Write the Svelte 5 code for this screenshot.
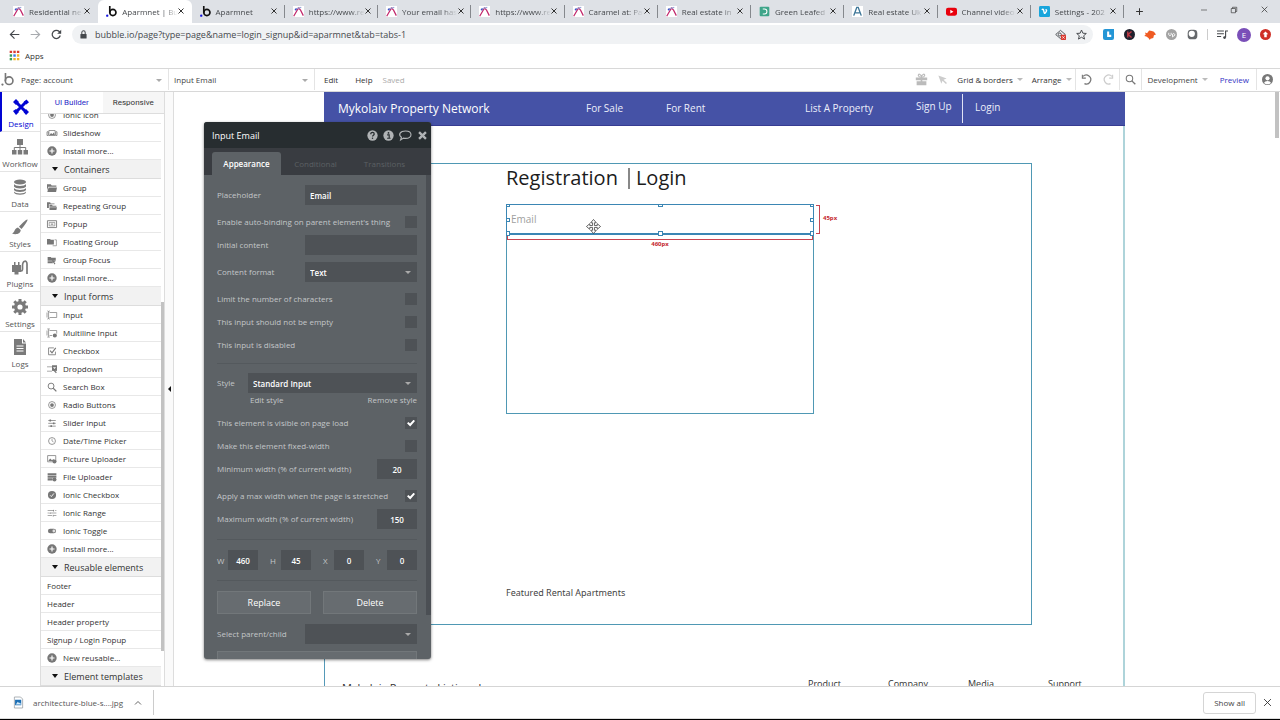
<script lang="ts">
  /**
   * App.svelte
   *
   * Browser window with the visual page editor open on the account page:
   * tool rail, element palette, page canvas and the property editor.
   */

  type Tab = { title: string; icon: string; active?: boolean };
  type Row = { label: string; icon?: string };
  type Section = { title?: string; rows: Row[] };

  const tabs: Tab[] = [
    { title: 'Residential ne', icon: 'chart' },
    { title: 'Aparmnet | Bu', icon: 'bubble', active: true },
    { title: 'Aparmnet', icon: 'bubble' },
    { title: 'https://www.re', icon: 'chart' },
    { title: 'Your email has', icon: 'chart' },
    { title: 'https://www.re', icon: 'chart' },
    { title: 'Caramel at: Pa', icon: 'chart' },
    { title: 'Real estate in', icon: 'chart' },
    { title: 'Green Leafed', icon: 'green' },
    { title: 'Real estate Uk', icon: 'letter' },
    { title: 'Channel video', icon: 'youtube' },
    { title: 'Settings - 202', icon: 'vimeo' },
  ];

  const rail = [
    { label: 'Design', icon: 'design' },
    { label: 'Workflow', icon: 'workflow' },
    { label: 'Data', icon: 'data' },
    { label: 'Styles', icon: 'brush' },
    { label: 'Plugins', icon: 'plug' },
    { label: 'Settings', icon: 'gear' },
    { label: 'Logs', icon: 'page' },
  ];

  const sections: Section[] = [
    {
      rows: [
        { label: 'Ionic Icon', icon: 'radio' },
        { label: 'Slideshow', icon: 'slides' },
        { label: 'Install more...', icon: 'plus' },
      ],
    },
    {
      title: 'Containers',
      rows: [
        { label: 'Group', icon: 'folder' },
        { label: 'Repeating Group', icon: 'folders' },
        { label: 'Popup', icon: 'popup' },
        { label: 'Floating Group', icon: 'floating' },
        { label: 'Group Focus', icon: 'focus' },
        { label: 'Install more...', icon: 'plus' },
      ],
    },
    {
      title: 'Input forms',
      rows: [
        { label: 'Input', icon: 'input' },
        { label: 'Multiline Input', icon: 'multiline' },
        { label: 'Checkbox', icon: 'check' },
        { label: 'Dropdown', icon: 'dropdown' },
        { label: 'Search Box', icon: 'search' },
        { label: 'Radio Buttons', icon: 'radio' },
        { label: 'Slider Input', icon: 'slider' },
        { label: 'Date/Time Picker', icon: 'clock' },
        { label: 'Picture Uploader', icon: 'picture' },
        { label: 'File Uploader', icon: 'file' },
        { label: 'Ionic Checkbox', icon: 'tick' },
        { label: 'Ionic Range', icon: 'range' },
        { label: 'Ionic Toggle', icon: 'toggle' },
        { label: 'Install more...', icon: 'plus' },
      ],
    },
    {
      title: 'Reusable elements',
      rows: [
        { label: 'Footer' },
        { label: 'Header' },
        { label: 'Header property' },
        { label: 'Signup / Login Popup' },
        { label: 'New reusable...', icon: 'plus' },
      ],
    },
    { title: 'Element templates', rows: [] },
  ];

  // All glyphs are drawn on a 16x16 grid with currentColor
  const line = 'fill="none" stroke="currentColor"';
  const icons: Record<string, string> = {
    chart: `<rect width="16" height="16" fill="#fff"/><path d="M1 15 8 3l3 3 4 8" fill="none" stroke="#c2286c" stroke-width="1.8"/><path d="m4 4 8-2" stroke="#9aa7d8" stroke-width="1.5"/><circle cx="4" cy="5" r="1.5" fill="#3b4fc4"/>`,
    bubble: `<path d="M5.5 0v10" stroke="#111" stroke-width="2.4"/><circle cx="10" cy="9.5" r="4.5" fill="none" stroke="#111" stroke-width="2.4"/><circle cx="1.8" cy="14" r="1.7" fill="#1414e0"/>`,
    logo: `<path d="M5.5 0v10" stroke="#777" stroke-width="2"/><circle cx="10" cy="9.5" r="4.7" fill="none" stroke="#777" stroke-width="2"/><circle cx="1.8" cy="14.2" r="1.4" fill="#777"/>`,
    green: `<rect x="1" y="1" width="14" height="14" rx="1.5" fill="#3fa58a"/><path d="M5.5 4.5h2.5a3.5 3.5 0 0 1 0 7H5.5" fill="none" stroke="#fff" stroke-width="1.5"/>`,
    letter: `<rect width="16" height="16" fill="#fff"/><path d="m2.5 14 4.500-12h2l4.500 12M5 10h6" fill="none" stroke="#3c7597" stroke-width="2"/>`,
    youtube: `<rect y="2.5" width="16" height="11.5" rx="3" fill="#e8000c"/><path d="m6.300 5.500 4.500 2.800-4.500 2.700z" fill="#fff"/>`,
    vimeo: `<rect width="16" height="16" rx="2" fill="#18a5dc"/><path d="M4 5.500c2-1.500 2.500-1 3 2 .6 3.500 1 4.500 3 1.500 1.500-2.500 1.500-4-.5-3.500" fill="none" stroke="#fff" stroke-width="2"/>`,
    close: `<path d="m3 3 10 10M13 3 3 13" ${line} stroke-width="2"/>`,
    thinclose: `<path d="m3 3 10 10M13 3 3 13" ${line} stroke-width="1.3"/>`,
    add: `<path d="M8 2v12M2 8h12" ${line} stroke-width="1.8"/>`,
    min: `<path d="M2 8h12" ${line} stroke-width="1.2"/>`,
    restore: `<path d="M2.500 5h8.500v8.500H2.500zM5 5V2.500h8.500V11H11" ${line} stroke-width="1.3"/>`,
    back: `<path d="M15 8H2m6-6L2 8l6 6" ${line} stroke-width="1.7"/>`,
    forward: `<path d="M1 8h13M8 2l6 6-6 6" ${line} stroke-width="1.7"/>`,
    reload: `<path d="M13.500 9.500A6 6 0 1 1 12 3.700L14 6" ${line} stroke-width="1.8"/><path d="M14.800 1v6H9z" fill="currentColor"/>`,
    lock: `<rect x="2.5" y="7" width="11" height="8" rx="1" fill="currentColor"/><path d="M5 7V4.500a3 3 0 0 1 6 0V7" ${line} stroke-width="1.8"/>`,
    apps: `<path d="M1 1h3.500v3.500H1zM11.500 1H15v3.500h-3.500z" fill="#d93c30"/><path d="M6.300 1h3.500v3.500H6.300z" fill="#d93c30"/><path d="M1 6.300h3.500v3.500H1z" fill="#3a9b53"/><path d="M6.300 6.300h3.500v3.500H6.300z" fill="#3b78e7"/><path d="M11.500 6.300H15v3.500h-3.500zM6.300 11.500h3.500V15H6.300zM11.500 11.500H15V15h-3.500z" fill="#efb52b"/><path d="M1 11.500h3.500V15H1z" fill="#3a9b53"/>`,
    blocked: `<path d="m1 8 7-6 7 6-7 6z" ${line} stroke-width="1.3"/><circle cx="7" cy="8" r="2.2" ${line} stroke-width="1.3"/><rect x="8.5" y="8.5" width="7.5" height="7.5" rx="1" fill="#d9392f"/><path d="m10.500 10.500 3.500 3.500m0-3.500-3.500 3.500" stroke="#fff"/>`,
    star: `<path d="m8 1.500 2 4.600 5 .4-3.800 3.300 1.200 4.900L8 12l-4.400 2.700 1.200-4.900L1 6.500l5-.4z" ${line} stroke-width="1.4"/>`,
    bluebox: `<path d="M3 0h13v13a3 3 0 0 1-3 3H3a3 3 0 0 1-3-3V3a3 3 0 0 1 3-3z" fill="#2496d6"/><path d="M6 3.500v8h6v-3H9v-5z" fill="#fff"/>`,
    kbadge: `<circle cx="8" cy="8" r="8" fill="#20222e"/><path d="M5.500 3.500v9m5.500-9L6 8l5 4.500" fill="none" stroke="#c03a45" stroke-width="2"/>`,
    bird: `<path d="M0 5 3 6l3-4 4 1 3 1 3 4-3 1-1 4-4 1-1 2-2-3-3-2-3-1 2-2z" fill="#ef5b23"/>`,
    grey: `<circle cx="8" cy="8" r="8" fill="#a3a3a3"/><path d="M4 5.500v3a2 2 0 0 0 3.500 0v-3M9.500 12V7.500a1.800 1.800 0 1 1 0 2" fill="none" stroke="#fff" stroke-width="1.3"/>`,
    darkring: `<rect x="1" y="1" width="14" height="14" rx="5" fill="#66696c"/><circle cx="7" cy="7" r="4.5" fill="#fff"/>`,
    queue: `<path d="M0 3h10M0 7h10M0 11h6M12.500 12V3H16" ${line} stroke-width="1.6"/><circle cx="11" cy="12.5" r="2" fill="currentColor"/>`,
    update: `<circle cx="8" cy="8" r="8" fill="#cf2e25"/><path d="m8 3.500 4 4H9.800V12H6.200V7.500H4z" fill="#fff"/>`,
    gift: `<path d="M1 5.500h14V9H1zM2 10h5v5H2zM9 10h5v5H9zM7 5.500h2V15H7z" fill="currentColor"/><path d="M8 5.500C3 5 3.500 1 5.500 1.500 7 2 8 4 8 5.500c0-1.500 1-3.500 2.500-4C12.500 1 13 5 8 5.500z" ${line} stroke-width="1.4"/>`,
    pointer: `<path d="m2 2 12 4.500-4.500 1.700 5 5-1.500 1.500-5-5L6.300 14z" fill="currentColor"/>`,
    undo: `<path d="M3 3.500A6.500 6.500 0 1 1 5 14" ${line} stroke-width="1.8"/><path d="M2 1v5h5" ${line} stroke-width="1.6"/>`,
    redo: `<path d="M13 3.500A6.500 6.500 0 1 0 11 14" ${line} stroke-width="1.8"/><path d="M14 1v5H9" ${line} stroke-width="1.6"/>`,
    search: `<circle cx="6.5" cy="6.5" r="4.7" ${line} stroke-width="1.5"/><path d="m10 10 5 5" ${line} stroke-width="2"/>`,
    user: `<circle cx="8" cy="8" r="8" fill="currentColor"/><circle cx="8" cy="6.3" r="3" fill="#fff"/><path d="M3 13c1-4 9-4 10 0-2.500 2.700-7.500 2.700-10 0z" fill="#fff"/>`,
    design: `<path d="m3 3 10 10M13 3 3 13" ${line} stroke-width="3"/><path d="m0 3 3-3 3 3-3 3zM10.500 3 13.500.5l2.500 2.800-2.700 2.200zM0 12l3-2 3 3-3 3zM10.500 13l2.500-3 3 3-3 3z" fill="currentColor"/>`,
    workflow: `<path d="M5 0h6v6H5zM0 11h4.500v4.500H0zM5.800 11h4.400v4.500H5.800zM11.500 11H16v4.500h-4.500z" fill="currentColor"/><path d="M8 6v5M2.300 11V8.500h11.400V11" ${line}/>`,
    data: `<ellipse cx="8" cy="3" rx="6" ry="2.6" fill="currentColor"/><path d="M2 5c1 2.500 11 2.500 12 0v2.500c-1 2.600-11 2.600-12 0zM2 9c1 2.500 11 2.500 12 0v2c-1 2.600-11 2.600-12 0zM2 12.500c1 2.500 11 2.500 12 0v1c-1 3-11 3-12 0z" fill="currentColor"/>`,
    brush: `<path d="M15.500.5c.8.8-4 7.500-6 9.500L7 7.700C9 5.500 14.500-.2 15.500.5zM6 8.500 8.700 11c0 4-5 5-8.700 3.500C3 13.500 2 9.500 6 8.500z" fill="currentColor"/>`,
    plug: `<path d="M0 6h2V3h1.500v3H6V3h1.500v3H9v7H6.500v2.500h-4V13H0z" fill="currentColor"/><path d="M9 12c2 0 1.500-3 1.500-5 0-6 4.500-6 4.500-2v10" ${line} stroke-width="1.7"/>`,
    gear: `<circle cx="8" cy="8" r="4.3" ${line} stroke-width="3.4"/><path d="M8 0v3M8 13v3M0 8h3M13 8h3M2.300 2.300l2.200 2.200M11.500 11.500l2.200 2.200M13.700 2.300l-2.200 2.200M4.500 11.500l-2.200 2.200" ${line} stroke-width="3"/>`,
    page: `<path d="M2 0h8v4.500h4V16H2zM11 0l3 3.500h-3z" fill="currentColor"/><path d="M4.500 7h7M4.500 9.500h7M4.500 12h7" stroke="#fff" stroke-width="1.1"/>`,
    plus: `<circle cx="8" cy="8" r="7.5" fill="currentColor"/><path d="M8 4v8M4 8h8" stroke="#fff" stroke-width="1.8"/>`,
    radio: `<circle cx="8" cy="8" r="5.5" ${line} stroke-width="1.2"/><circle cx="8" cy="8" r="3" fill="currentColor"/>`,
    slides: `<path d="M3 4h10v8H3zM0 6h2v6H0zM14 6h2v6h-2z" ${line} stroke-width="1.2"/><path d="m4 11 2.500-3 2 2L11 7l1.500 4z" fill="currentColor"/>`,
    folder: `<path d="M0 2h6l1.500 2H15v2H2l-2 6zM2.500 7H16l-1.500 7.500H.5z" fill="currentColor"/>`,
    folders: `<path d="M0 2h5l1 2h6v1H3v6H0z" fill="currentColor"/><path d="M4 6h4l1 1.500h6V9H4zM4 10h12l-1 4.500H4z" fill="currentColor"/>`,
    popup: `<path d="M.7 2.700h14.600v11H.7z" ${line} stroke-width="1.4"/><path d="M3.500 5.500h9v5.500h-9z" ${line}/><path d="M6 8.200h4" ${line} stroke-width="1.6"/>`,
    floating: `<path d="M0 3h5l1 1.500h5V12H0z" fill="currentColor"/><path d="M12 4.500h3v9.500H9" ${line}/>`,
    focus: `<path d="M1 3h5l1 1.500h7V9H1zM1 10h7v3H1z" fill="currentColor"/><path d="m8 8 6 2-2.500 1 2 3-1.500 1-2-3-1.500 2z" fill="currentColor"/>`,
    input: `<path d="M4 4h11.500v8H4M2.500 2v12M.5 1.500c1 0 2 .3 2 1 0-.7 1-1 2-1M.5 14.500c1 0 2-.3 2-1 0 .7 1 1 2 1M0 4v8" ${line} stroke-width="1.1"/>`,
    multiline: `<path d="M4 4h11.500v5M4 12h4M2.500 2v12M.5 1.500h4M.5 14.500h4M0 4v8" ${line} stroke-width="1.1"/><circle cx="12.5" cy="12" r="3.3" fill="currentColor"/>`,
    check: `<path d="M13.500 9v5H2.500V3H11" ${line} stroke-width="1.3"/><path d="m5 7.500 3 3.500 6-8" ${line} stroke-width="1.8"/>`,
    dropdown: `<path d="M0 4.500h8M0 11.500h8" ${line}/><path d="M8 2h8v9H8z" fill="currentColor"/><path d="M9.500 5h5L12 8z" fill="#fff"/><path d="m10 9 5 5" ${line} stroke-width="2"/>`,
    slider: `<path d="M2 4h12M2 8.500h12M2 13h12" ${line} stroke-width="1.2"/><path d="M4 2.500h2.500v3H4zM9.500 7H12v3H9.500zM5.500 11.500H8v3H5.500z" fill="currentColor"/>`,
    clock: `<circle cx="8" cy="8" r="5.5" ${line} stroke-width="1.2"/><path d="M8 4.500V8l2.500 1.500" ${line}/>`,
    picture: `<path d="M1 2.500h13v10H1z" ${line} stroke-width="1.2"/><path d="m2 11 3-4 3 3 2-2 3 3z" fill="currentColor"/><circle cx="12" cy="12" r="3.2" fill="currentColor"/>`,
    file: `<path d="M1 2h14v3.500H1zM1 6.500h14V9H1zM1 10h8v3.500H1z" fill="currentColor"/><circle cx="12" cy="12" r="3.2" fill="currentColor"/>`,
    tick: `<circle cx="8" cy="8" r="6.5" fill="currentColor"/><path d="m5 8.500 2 2 4-5" fill="none" stroke="#fff" stroke-width="1.4"/>`,
    range: `<path d="M1 4h9M13 4h2M1 8h2M6 8h9M1 12h7M11 12h4" ${line}/><path d="M10.500 3v2.500M5 7v2.500M10 11v2.500" ${line} stroke-width="1.5"/>`,
    toggle: `<rect x="1.5" y="4.5" width="13" height="7" rx="3.5" fill="currentColor"/><circle cx="11" cy="8" r="2.3" fill="#ddd"/>`,
    help: `<circle cx="8" cy="8" r="7.5" fill="currentColor"/><path d="M5.500 6c0-3.500 5-3 5-.3C10.500 7.500 8 7.500 8 9.500" fill="none" stroke="#272d30" stroke-width="1.8"/><circle cx="8" cy="12" r="1.1" fill="#272d30"/>`,
    info: `<circle cx="8" cy="8" r="7.5" fill="currentColor"/><circle cx="8" cy="4.3" r="1.3" fill="#272d30"/><path d="M6 7h3v5M6 12h5" fill="none" stroke="#272d30" stroke-width="1.7"/>`,
    comment: `<path d="M8 2.500c9 0 9 9 0 9-1 0-2-.2-2.500-.3L2 13.500l1-3.300C-1.500 7 1.500 2.500 8 2.500z" ${line} stroke-width="1.4"/>`,
    bigclose: `<path d="m3 3 10 10M13 3 3 13" ${line} stroke-width="3.4"/>`,
    move: `<path d="M8 .5 11 4H9v3h3V5l3.500 3-3.500 3V9H9v3h2l-3 3.500L5 12h2V9H4v2L.5 8 4 5v2h3V4H5z" fill="#fff" stroke="#333" stroke-width=".8"/>`,
    image: `<path d="M2 0h9l3 3v13H2z" fill="#fff" stroke="#8b9299"/><path d="M3 4h9v8H3z" fill="#1c6fb5"/><path d="m4 11 3-4 2 2 1-1 2 3z" fill="#d7ecfa"/>`,
    up: `<path d="m2 11 6-6 6 6" ${line} stroke-width="1.8"/>`,
  };

  let placeholder = $state('Email');
  let visible = $state(true);
  let stretched = $state(true);
  let size = $state([
    { key: 'W', value: '460' },
    { key: 'H', value: '45' },
    { key: 'X', value: '0' },
    { key: 'Y', value: '0' },
  ]);
</script>

{#snippet icon(name: string, cls = '')}
  <svg class="icon {cls}" viewBox="0 0 16 16" aria-hidden="true">{@html icons[name]}</svg>
{/snippet}

<div class="browser">
  <div class="tab-strip">
    <div class="tabs">
      {#each tabs as tab}
        <div class="tab" class:active={tab.active}>
          {@render icon(tab.icon, 'favicon')}
          <span class="tab-title">{tab.title}</span>
          <button aria-label="Close tab">{@render icon('close', 'tiny')}</button>
        </div>
      {/each}
    </div>
    <button class="new-tab" aria-label="New tab">{@render icon('add', 'small')}</button>
    <div class="window-buttons">
      <button aria-label="Minimize">{@render icon('min', 'tiny')}</button>
      <button aria-label="Restore">{@render icon('restore', 'tiny')}</button>
      <button aria-label="Close">{@render icon('thinclose', 'small')}</button>
    </div>
  </div>

  <div class="address-bar">
    <div class="history">
      <button aria-label="Back">{@render icon('back', 'medium')}</button>
      <button class="faded" aria-label="Forward">{@render icon('forward', 'medium')}</button>
      <button aria-label="Reload">{@render icon('reload', 'medium')}</button>
    </div>
    <div class="omnibox">
      {@render icon('lock', 'small')}
      <input
        aria-label="Address"
        value="bubble.io/page?type=page&name=login_signup&id=aparmnet&tab=tabs-1"
      />
      {@render icon('blocked', 'medium')}
      {@render icon('star', 'medium')}
    </div>
    <div class="extensions">
      {#each ['bluebox', 'kbadge', 'bird', 'grey', 'darkring'] as name}
        {@render icon(name, 'medium')}
      {/each}
    </div>
    <div class="profile">
      {@render icon('queue', 'medium')}
      <span class="avatar">E</span>
      {@render icon('update', 'medium')}
    </div>
  </div>

  <div class="bookmarks">
    {@render icon('apps', 'medium')}
    <span>Apps</span>
  </div>

  <header class="editor-bar">
    {@render icon('logo', 'logo')}
    <div class="picker page-picker">
      <select aria-label="Page"><option>Page: account</option></select>
    </div>
    <div class="picker element-picker">
      <select aria-label="Element"><option>Input Email</option></select>
    </div>
    <button class="menu">Edit</button>
    <button class="menu">Help</button>
    <span class="saved">Saved</span>
    <div class="editor-tools">
      {@render icon('gift', 'large pale')}
      {@render icon('pointer', 'medium faint')}
      <button class="caret">Grid &amp; borders</button>
      <button class="caret">Arrange</button>
    </div>
    <div class="cell">
      <button aria-label="Undo">{@render icon('undo', 'medium')}</button>
      <button class="faint" aria-label="Redo">{@render icon('redo', 'medium')}</button>
    </div>
    <div class="cell">
      <button aria-label="Search">{@render icon('search', 'medium')}</button>
    </div>
    <div class="cell version">
      <button class="caret">Development</button>
      <a href="#preview">Preview</a>
    </div>
    <div class="cell account">{@render icon('user', 'medium')}</div>
  </header>

  <main>
    <nav class="rail">
      {#each rail as item, i}
        <a href="#{item.label}" class:current={i === 0}>
          {@render icon(item.icon, 'rail-icon')}
          <span>{item.label}</span>
        </a>
      {/each}
    </nav>

    <aside class="palette">
      <div class="palette-tabs">
        <button class="current">UI Builder</button>
        <button>Responsive</button>
      </div>
      <div class="palette-body">
        <div class="palette-list">
          {#each sections as section}
            {#if section.title}
              <h3>{section.title}</h3>
            {/if}
            {#each section.rows as row}
              <div class="element">
                {#if row.icon}
                  {@render icon(row.icon, 'element-icon')}
                {/if}
                <span>{row.label}</span>
              </div>
            {/each}
          {/each}
        </div>
        <div class="scroll-track"><div class="thumb"></div></div>
      </div>
    </aside>
    <button class="collapse" aria-label="Collapse palette"></button>

    <section class="canvas">
      <div class="artboard">
        <div class="site-header">
          <strong>Mykolaiv Property Network</strong>
          <span>For Sale</span>
          <span>For Rent</span>
          <span>List A Property</span>
          <span class="raised">Sign Up</span>
          <span class="raised divided">Login</span>
        </div>

        <div class="group">
          <h1><span>Registration</span><span class="login">Login</span></h1>
          <div class="form">
            <div class="selected">
              <input aria-label="Email" placeholder={placeholder} />
              {#each ['nw', 'n', 'ne', 'w', 'e', 'sw', 's', 'se'] as handle}
                <i class="handle {handle}"></i>
              {/each}
              <div class="measure-w">460px</div>
              <div class="measure-h">45px</div>
              {@render icon('move', 'move')}
            </div>
          </div>
          <p>Featured Rental Apartments</p>
        </div>

        <div class="site-footer">
          <strong>Mykolaiv Property Listings l</strong>
          <span>Product</span>
          <span>Company</span>
          <span>Media</span>
          <span>Support</span>
        </div>
      </div>
      <div class="page-thumb"></div>
    </section>

    <div class="property-editor">
      <div class="title-bar">
        <h2>Input Email</h2>
        {@render icon('help', 'medium')}
        {@render icon('info', 'medium')}
        {@render icon('comment', 'large')}
        <button aria-label="Close editor">{@render icon('bigclose', 'medium')}</button>
      </div>
      <div class="editor-tabs">
        <button class="current">Appearance</button>
        <button>Conditional</button>
        <button>Transitions</button>
      </div>
      <div class="fields">
        <div class="field">
          <label for="placeholder">Placeholder</label>
          <input id="placeholder" class="box" bind:value={placeholder} />
        </div>
        <label class="field spaced">Enable auto-binding on parent element's thing<input type="checkbox" /></label>
        <div class="field">
          <label for="initial">Initial content</label>
          <input id="initial" class="box" />
        </div>
        <div class="field spaced">
          <label for="format">Content format</label>
          <div class="dark-select">
            <select id="format"><option>Text</option></select>
          </div>
        </div>
        <label class="field spaced">Limit the number of characters<input type="checkbox" /></label>
        <label class="field">This input should not be empty<input type="checkbox" /></label>
        <label class="field">This input is disabled<input type="checkbox" /></label>
        <hr class="tight" />
        <div class="field">
          <label for="style">Style</label>
          <div class="dark-select wide">
            <select id="style"><option>Standard Input</option></select>
          </div>
        </div>
        <div class="style-links">
          <a href="#edit-style">Edit style</a>
          <a href="#remove-style">Remove style</a>
        </div>
        <label class="field spaced">
          This element is visible on page load<input type="checkbox" bind:checked={visible} />
        </label>
        <label class="field">Make this element fixed-width<input type="checkbox" /></label>
        <div class="field">
          <label for="min-width">Minimum width (% of current width)</label>
          <input id="min-width" class="box number" value="20" />
        </div>
        <label class="field spaced">
          Apply a max width when the page is stretched<input type="checkbox" bind:checked={stretched} />
        </label>
        <div class="field">
          <label for="max-width">Maximum width (% of current width)</label>
          <input id="max-width" class="box number" value="150" />
        </div>
        <hr />
        <div class="size">
          {#each size as item}
            <label>{item.key}<input class="box" bind:value={item.value} /></label>
          {/each}
        </div>
        <hr />
        <div class="actions">
          <button>Replace</button>
          <button>Delete</button>
        </div>
        <div class="field spaced">
          <label for="relative">Select parent/child</label>
          <div class="dark-select">
            <select id="relative"><option></option></select>
          </div>
        </div>
        <div class="actions spaced"><button>Reveal in the element tree</button></div>
        <div class="fields-thumb"></div>
      </div>
    </div>
  </main>

  <footer class="downloads">
    <button class="download">
      {@render icon('image', 'medium')}
      <span>architecture-blue-s....jpg</span>
      {@render icon('up', 'tiny')}
    </button>
    <button class="show-all">Show all</button>
    <button aria-label="Close downloads">{@render icon('thinclose', 'medium')}</button>
  </footer>
</div>

<style>
  :global(body) {
    background: #fff;
    font-family: 'Open Sans', 'Noto Sans', sans-serif;
    font-size: 8px;
    color: #333;
  }

  .browser,
  .browser :global(*) {
    box-sizing: border-box;
  }

  .browser {
    display: flex;
    flex-direction: column;
    height: 100vh;
    min-height: 480px;
    overflow: hidden;
    border-bottom: 1px solid #000;
  }

  button,
  input,
  select {
    min-width: 0;
    margin: 0;
    padding: 0;
    border: 0;
    background: none;
    font: inherit;
    color: inherit;
    outline: none;
  }

  button {
    display: flex;
    align-items: center;
    justify-content: center;
    white-space: nowrap;
  }

  select,
  input[type='checkbox'] {
    appearance: none;
  }

  a {
    color: inherit;
    text-decoration: none;
  }

  h1,
  h2,
  h3,
  p {
    margin: 0;
    font-weight: 400;
  }

  .icon {
    display: block;
    flex: none;
    width: 11px;
    height: 11px;
    overflow: visible;
  }

  .tiny {
    width: 8px;
    height: 8px;
  }

  .small {
    width: 9px;
    height: 9px;
  }

  .large {
    width: 13px;
    height: 13px;
  }

  /* Browser chrome */
  .tab-strip {
    display: flex;
    flex: none;
    height: 23px;
    background: #dee1e6;
  }

  .tabs {
    display: flex;
    flex: 1;
    min-width: 0;
    padding-left: 5px;
  }

  .tab {
    display: flex;
    flex: 1 1 0;
    align-items: center;
    min-width: 0;
    padding: 0 7px 1px 8px;
    background: linear-gradient(#85888d, #85888d) right center / 1px 13px no-repeat;
  }

  .tab:first-child {
    background: none;
  }

  .tab.active {
    border-radius: 6px 6px 0 0;
    background: #fff;
  }

  .tab-title {
    flex: 1;
    padding-left: 5px;
    white-space: nowrap;
    color: #45484c;
    mask-image: linear-gradient(90deg, #000 75%, transparent);
  }

  .new-tab {
    width: 30px;
  }

  .window-buttons {
    display: flex;
    align-items: center;
    gap: 22px;
    padding: 0 11px 4px 46px;
  }

  .address-bar {
    display: flex;
    flex: none;
    align-items: center;
    height: 23px;
    color: #45484c;
  }

  .history {
    display: flex;
    gap: 10px;
    width: 72px;
    padding-left: 9px;
  }

  .faded {
    color: #a8abaf;
  }

  .omnibox {
    display: flex;
    flex: 1;
    align-items: center;
    gap: 10px;
    height: 19px;
    padding: 0 6px 0 7px;
    border-radius: 10px;
    background: #f0f2f4;
  }

  .omnibox .small {
    margin-right: -3px;
  }

  .omnibox input {
    flex: 1;
    font-size: 9px;
  }

  .extensions {
    display: flex;
    gap: 10px;
    padding: 0 9px 0 10px;
    border-right: 1px solid #ccc;
  }

  .profile {
    display: flex;
    align-items: center;
    gap: 9px;
    padding: 0 9px;
  }

  .avatar {
    width: 14px;
    height: 14px;
    border-radius: 7px;
    background: #7a4fb8;
    color: #fff;
    line-height: 14px;
    text-align: center;
  }

  .bookmarks {
    display: flex;
    flex: none;
    align-items: center;
    gap: 5px;
    height: 22px;
    padding: 0 9px 3px;
  }

  /* Editor top bar */
  .editor-bar {
    display: flex;
    flex: none;
    align-items: center;
    height: 24px;
    padding-bottom: 1px;
    border-top: 1px solid #d8d8d8;
    border-bottom: 1px solid #d8d8d8;
  }

  .editor-bar > .logo {
    width: 13px;
    height: 13px;
    margin-right: 2px;
    margin-left: 1px;
  }

  .picker {
    position: relative;
    height: 100%;
    padding-left: 5px;
    border-right: 1px solid #e4e4e4;
  }

  .picker select {
    width: 100%;
    height: 100%;
    color: #444;
  }

  .page-picker {
    width: 153px;
  }

  .element-picker {
    width: 146px;
  }

  .picker::after,
  .dark-select::after {
    position: absolute;
    top: calc(50% - 1px);
    right: 6px;
    border: 3px solid transparent;
    border-top-color: #aaa;
    border-bottom: 0;
    content: '';
  }

  .caret::after {
    margin-left: 4px;
    border: 3px solid transparent;
    border-top-color: #bbb;
    border-bottom: 0;
    content: '';
  }

  .menu {
    padding-left: 9px;
    padding-right: 8px;
  }

  .saved {
    padding-left: 2px;
    color: #aaa;
  }

  .editor-tools {
    display: flex;
    flex: 1;
    align-items: center;
    justify-content: flex-end;
    gap: 9px;
    padding-right: 3px;
  }

  .pale {
    color: #bbb;
  }

  .faint {
    color: #ccc;
  }

  .cell {
    display: flex;
    align-items: center;
    gap: 11px;
    height: 100%;
    padding: 0 5px;
    border-left: 1px solid #e4e4e4;
    color: #777;
  }

  .version {
    gap: 12px;
    padding: 0 7px 0 6px;
    color: #444;
  }

  .version a {
    color: #3333c4;
  }

  .account {
    padding: 0 7px 0 5px;
  }

  /* Work area */
  main {
    position: relative;
    display: flex;
    flex: 1;
    min-height: 0;
  }

  .rail {
    flex: none;
    width: 41px;
    border-right: 1px solid #ddd;
  }

  .rail a {
    display: flex;
    flex-direction: column;
    align-items: center;
    gap: 3px;
    height: 40px;
    padding-top: 7px;
    border-bottom: 1px solid #e4e4e4;
    line-height: 12px;
    color: #555;
  }

  .rail .current {
    border-left: 2px solid #0205d3;
    color: #0205d3;
  }

  .rail a > :global(.rail-icon) {
    width: 16px;
    height: 16px;
    color: #7a7a7a;
  }

  .rail .current > :global(.rail-icon) {
    color: #0205d3;
  }

  .palette {
    display: flex;
    flex: none;
    flex-direction: column;
    width: 124px;
    border-right: 1px solid #ddd;
  }

  .palette-tabs {
    display: flex;
    flex: none;
    height: 22px;
    border-bottom: 1px solid #ddd;
    font-family: Roboto, sans-serif;
  }

  .palette-tabs button {
    flex: 1;
    background: #f6f6f6;
  }

  .palette-tabs .current {
    background: #fff;
    color: #2a2ac8;
  }

  .palette-body {
    display: flex;
    flex: 1;
    min-height: 0;
  }

  .palette-list {
    display: flex;
    flex: 1;
    flex-direction: column;
    justify-content: flex-end;
    overflow: hidden;
  }

  .element {
    display: flex;
    flex: none;
    align-items: center;
    gap: 6px;
    height: 18px;
    padding-left: 6px;
    border-bottom: 1px solid #e8e8e8;
  }

  .element > :global(.element-icon) {
    width: 10px;
    height: 10px;
    color: #777;
  }

  .palette h3 {
    display: flex;
    flex: none;
    align-items: center;
    gap: 6px;
    height: 19px;
    padding-left: 11px;
    border-bottom: 1px solid #ddd;
    background: #f2f2f2;
    font-size: 9px;
  }

  .palette h3::before {
    border: 3px solid transparent;
    border-top: 4px solid #111;
    border-bottom: 0;
    content: '';
  }

  .scroll-track {
    width: 3px;
    padding-top: 188px;
    padding-bottom: 35px;
  }

  .thumb {
    height: 100%;
    background: #c2c2c2;
  }

  .collapse {
    flex: none;
    width: 9px;
    border-right: 1px solid #ddd;
    background: #fafafa;
  }

  .collapse::before {
    border: 3px solid transparent;
    border-right-color: #111;
    border-left: 0;
    content: '';
  }

  /* Page canvas */
  .canvas {
    position: relative;
    flex: 1;
    min-width: 0;
    padding-left: 150px;
    overflow: hidden;
  }

  .artboard {
    display: flex;
    flex-direction: column;
    width: 801px;
    border-right: 2px solid #aed4da;
    border-left: 1px solid #5599b8;
  }

  .site-header {
    display: grid;
    grid-template-columns: 248px 80px 139px 111px 46px auto;
    flex: none;
    align-items: center;
    height: 34px;
    margin: 0 -2px 37px -1px;
    padding-bottom: 1px;
    padding-left: 14px;
    border-bottom: 1px solid #373c92;
    background: #4552a6;
    font-size: 10px;
    color: #eceefa;
  }

  .site-header strong {
    font-size: 12px;
    font-weight: 500;
    color: #fff;
  }

  .site-header .raised {
    padding-bottom: 4px;
  }

  .site-header .divided {
    padding: 6px 0 9px 12px;
    border-left: 1px solid #e0e2f4;
  }

  .group {
    width: 614px;
    height: 462px;
    margin-left: 93px;
    padding-left: 87px;
    border: 1px solid #4f98b4;
  }

  h1 {
    display: flex;
    height: 40px;
    font-size: 20px;
    font-weight: 500;
    line-height: 27px;
    color: #1c1c1c;
  }

  .login {
    height: 21px;
    margin: 4px 0 0 10px;
    padding-left: 6px;
    border-left: 2px solid #888;
    line-height: 19px;
  }

  .form {
    width: 308px;
    height: 210px;
    border: 1px solid #4f98b4;
  }

  .selected {
    position: relative;
    height: 31px;
    margin: -1px;
    border: 1px solid #3b86b4;
    border-bottom-width: 2px;
  }

  .selected input {
    width: 100%;
    height: 100%;
    padding-left: 4px;
    font-size: 10px;
  }

  .selected input::placeholder {
    color: #a0a0a0;
  }

  .handle {
    position: absolute;
    width: 4px;
    height: 4px;
    border: 1px solid #3b86b4;
    background: #fff;
  }

  .nw,
  .w,
  .sw {
    left: -1px;
  }

  .ne,
  .e,
  .se {
    right: -1px;
  }

  .n,
  .s {
    left: calc(50% - 2px);
    width: 5px;
  }

  .nw,
  .n,
  .ne {
    top: -1px;
    height: 3px;
  }

  .w,
  .e {
    top: 13px;
  }

  .sw,
  .s,
  .se {
    bottom: -3px;
    height: 5px;
  }

  .measure-w,
  .measure-h {
    position: absolute;
    font-size: 6px;
    font-weight: 700;
    line-height: 8px;
    color: #c41f2d;
  }

  .measure-w {
    top: 31px;
    right: 0;
    left: 0;
    padding-top: 4px;
    text-align: center;
  }

  .measure-w::before {
    position: absolute;
    top: 0;
    right: 0;
    left: 0;
    height: 3px;
    border: 1px solid #c84450;
    border-top: 0;
    content: '';
  }

  .measure-h {
    top: 0;
    left: 309px;
    height: 29px;
    padding-left: 7px;
    line-height: 27px;
  }

  .measure-h::before {
    position: absolute;
    top: 0;
    bottom: 0;
    left: 0;
    width: 3px;
    border: 1px solid #c84450;
    border-left: 0;
    content: '';
  }

  .selected > :global(.move) {
    position: absolute;
    top: 14px;
    left: 79px;
    width: 15px;
    height: 15px;
  }

  .group p {
    padding-top: 172px;
    font-family: 'Noto Sans', sans-serif;
    font-size: 9px;
    line-height: 14px;
    color: #444;
  }

  .site-footer {
    display: grid;
    grid-template-columns: 466px 80px 80px 80px auto;
    height: 80px;
    padding: 52px 0 0 17px;
    font-size: 9px;
    font-weight: 500;
    line-height: 14px;
  }

  .site-footer strong {
    padding-top: 4px;
    font-size: 11px;
    font-weight: 500;
  }

  .page-thumb {
    position: absolute;
    top: 0;
    right: 1px;
    width: 4px;
    height: 46px;
    background: #c2c2c2;
  }

  /* Property editor */
  .property-editor {
    position: absolute;
    top: 30px;
    bottom: 27px;
    left: 204px;
    display: flex;
    flex-direction: column;
    width: 227px;
    overflow: hidden;
    border-radius: 3px;
    background: #5d6266;
    box-shadow: 0 1px 3px rgba(0, 0, 0, 0.5);
    color: #c3c6c8;
  }

  .title-bar {
    display: flex;
    flex: none;
    align-items: center;
    gap: 5px;
    height: 26px;
    padding: 0 3px 0 8px;
    background: #272d30;
    color: #b0b3b5;
  }

  .title-bar h2 {
    flex: 1;
    font-size: 9px;
    font-weight: 500;
    color: #fff;
  }

  .editor-tabs {
    display: flex;
    flex: none;
    align-items: flex-end;
    height: 27px;
    padding-left: 8px;
    background: #393c41;
  }

  .editor-tabs button {
    width: 69px;
    height: 23px;
    color: #5c6064;
    font-weight: 500;
  }

  .editor-tabs .current {
    border-radius: 3px 3px 0 0;
    background: #5d6266;
    font-weight: 600;
    color: #fff;
  }

  .fields {
    position: relative;
    display: flex;
    flex: 1;
    flex-direction: column;
    gap: 3px;
    min-height: 0;
    padding: 10px 14px 0 13px;
    overflow: hidden;
  }

  .field {
    display: flex;
    flex: none;
    align-items: center;
    justify-content: space-between;
    height: 20px;
    white-space: nowrap;
  }

  .field > label,
  label.field {
    padding-bottom: 2px;
  }

  .spaced {
    margin-top: 4px;
  }

  .box,
  .dark-select {
    width: 112px;
    height: 20px;
    padding-left: 5px;
    background: #4e5256;
    font-weight: 600;
    color: #fff;
  }

  .dark-select {
    position: relative;
  }

  .dark-select select {
    width: 100%;
    height: 100%;
  }

  .wide {
    width: 169px;
  }

  .number {
    width: 40px;
    padding: 0;
    text-align: center;
  }

  .fields input[type='checkbox'] {
    display: grid;
    width: 12px;
    height: 12px;
    margin-top: 2px;
    place-items: center;
    background: #4e5256;
  }

  .fields input[type='checkbox']:checked::before {
    width: 8px;
    height: 7px;
    background: #fff;
    clip-path: polygon(0 55%, 18% 35%, 38% 58%, 82% 4%, 100% 20%, 40% 100%);
    content: '';
  }

  .fields hr {
    flex: none;
    width: 100%;
    height: 1px;
    margin: 7px 0;
    border: 0;
    background: #54595d;
  }

  .fields .tight {
    margin: 5px 0 6px;
  }

  .style-links {
    display: flex;
    flex: none;
    justify-content: space-between;
    height: 10px;
    padding-left: 33px;
    line-height: 7px;
  }

  .size {
    display: flex;
    flex: none;
    justify-content: space-between;
  }

  .size label {
    display: flex;
    align-items: center;
    justify-content: space-between;
    width: 41px;
  }

  .size .box {
    width: 30px;
    padding: 0;
    text-align: center;
  }

  .actions {
    display: flex;
    flex: none;
    gap: 12px;
    margin-bottom: 3px;
  }

  .actions button {
    flex: 1;
    height: 23px;
    border: 1px solid #72777a;
    background: #676c70;
    font-size: 9px;
    color: #fff;
  }

  .fields-thumb {
    position: absolute;
    top: 0;
    right: 0;
    bottom: 44px;
    width: 5px;
    background: #4b4f54;
  }

  /* Downloads shelf */
  .downloads {
    display: flex;
    flex: none;
    align-items: center;
    height: 33px;
    padding-right: 7px;
    border-top: 1px solid #d5d5d5;
    border-bottom: 1px solid #ddd;
  }

  .download {
    gap: 9px;
    height: 25px;
    margin-right: auto;
    padding: 0 11px 0 13px;
    border-right: 1px solid #ccc;
    color: #555;
  }

  .download span {
    padding-right: 2px;
  }

  .show-all {
    height: 22px;
    margin-right: 6px;
    padding: 0 10px;
    border: 1px solid #d5d5d5;
    border-radius: 3px;
    color: #444;
  }
</style>
